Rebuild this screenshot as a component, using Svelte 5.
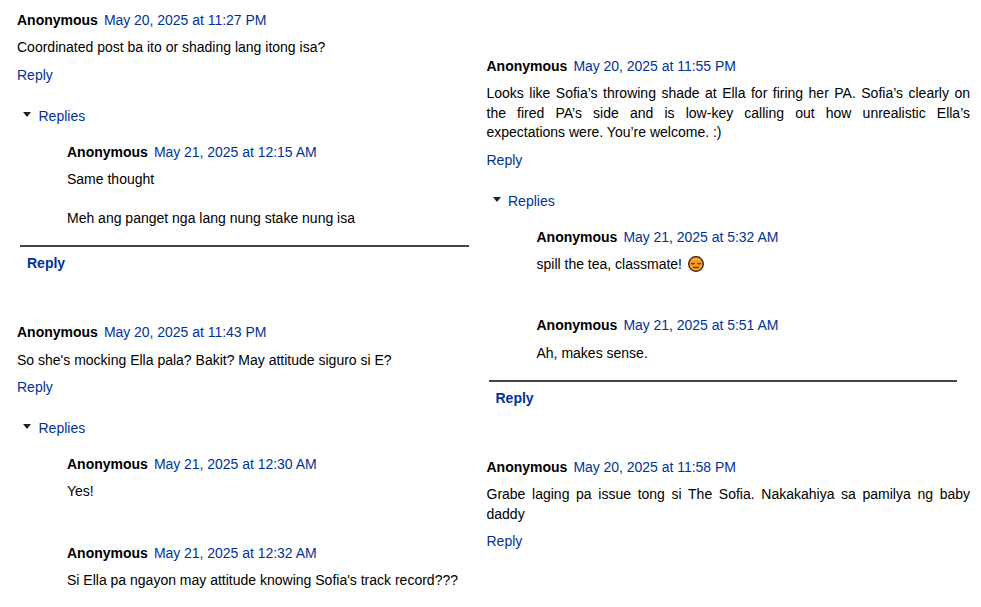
<script>
  const left = [
    {
      date: "May 20, 2025 at 11:27 PM",
      text: ["Coordinated post ba ito or shading lang itong isa?"],
      replies: [
        {
          date: "May 21, 2025 at 12:15 AM",
          text: ["Same thought", "Meh ang panget nga lang nung stake nung isa"]
        }
      ],
      footer: true
    },
    {
      date: "May 20, 2025 at 11:43 PM",
      text: ["So she's mocking Ella pala? Bakit? May attitude siguro si E?"],
      replies: [
        { date: "May 21, 2025 at 12:30 AM", text: ["Yes!"] },
        {
          date: "May 21, 2025 at 12:32 AM",
          text: ["Si Ella pa ngayon may attitude knowing Sofia's track record???"]
        }
      ]
    }
  ];

  const right = [
    {
      date: "May 20, 2025 at 11:55 PM",
      text: [
        "Looks like Sofia’s throwing shade at Ella for firing her PA. Sofia’s clearly on the fired PA’s side and is low-key calling out how unrealistic Ella’s expectations were. You’re welcome. :)"
      ],
      replies: [
        { date: "May 21, 2025 at 5:32 AM", text: ["spill the tea, classmate!"], emoji: true },
        { date: "May 21, 2025 at 5:51 AM", text: ["Ah, makes sense."] }
      ],
      footer: true
    },
    {
      date: "May 20, 2025 at 11:58 PM",
      text: ["Grabe laging pa issue tong si The Sofia. Nakakahiya sa pamilya ng baby daddy"]
    }
  ];
</script>

{#snippet byline(date)}
  <div class="byline">
    <span class="name">Anonymous</span>
    <a href="#c" class="date">{date}</a>
  </div>
{/snippet}

{#snippet comment(c)}
  <div class="comment">
    {@render byline(c.date)}
    <p class="body">{c.text[0]}</p>
    <a href="#r" class="reply">Reply</a>
    {#if c.replies}
      <div class="toggle">
        <span class="arrow"></span>
        <a href="#t">Replies</a>
      </div>
      <div class="thread">
        {#each c.replies as r}
          <div class="nested">
            {@render byline(r.date)}
            {#each r.text as line}
              <p class="body">
                {line}
                {#if r.emoji}
                  <svg class="emoji" viewBox="0 0 16 16" width="16" height="16">
                    <circle cx="8" cy="8" r="7.3" fill="#f59b26" stroke="#2a1904" stroke-width="1.3" />
                    <path d="M3.4 7.2q1.6 1.6 3.2 0M9.4 7.2q1.6 1.6 3.2 0" fill="none" stroke="#3d2206" stroke-width="1.1" />
                    <path d="M5.2 11q2.8 1.5 5.6 0" fill="none" stroke="#3d2206" stroke-width="1.2" />
                    <path d="M4 4q4-2.2 8 0" fill="none" stroke="#fbbf66" stroke-width="1" />
                  </svg>
                {/if}
              </p>
            {/each}
          </div>
        {/each}
      </div>
    {/if}
    {#if c.footer}
      <div class="footer">
        <a href="#f">Reply</a>
      </div>
    {/if}
  </div>
{/snippet}

<main class="page">
  <section class="col col-left">
    {#each left as c}
      {@render comment(c)}
    {/each}
  </section>
  <section class="col col-right">
    {#each right as c}
      {@render comment(c)}
    {/each}
  </section>
</main>

<style>
  :global(body) {
    margin: 0;
    background: #fff;
    overflow: hidden;
  }
  .page {
    display: flex;
    height: 607px;
    overflow: hidden;
    font-family: "Liberation Sans", Arial, sans-serif;
    font-size: 14px;
    line-height: 20px;
    color: #000;
  }
  a {
    color: #003399;
    text-decoration: none;
  }
  .col-left {
    width: 452px;
    margin-left: 17px;
    padding-top: 10px;
  }
  .col-right {
    width: 483.5px;
    margin-left: 17.5px;
    padding-top: 56px;
  }
  .byline {
    display: flex;
    gap: 6px;
  }
  .name {
    font-weight: 700;
  }
  .date {
    letter-spacing: -0.03px;
  }
  .body {
    margin: 7.3px 0 0;
    text-align: justify;
  }
  .col-right .body {
    margin-top: 8px;
    line-height: 19.7px;
  }
  .reply {
    display: block;
    margin-top: 7.7px;
  }
  .col-right .reply {
    margin-top: 7px;
  }
  .toggle {
    display: flex;
    align-items: center;
    gap: 7.5px;
    margin-top: 20.8px;
    padding-left: 6px;
  }
  .arrow {
    width: 0;
    height: 0;
    border-left: 4.5px solid transparent;
    border-right: 4.5px solid transparent;
    border-top: 5px solid #222;
    margin-bottom: 3px;
  }
  .thread {
    padding-left: 50px;
    margin-top: 16px;
  }
  .nested + .nested {
    margin-top: 41.7px;
  }
  .col-right .nested + .nested {
    margin-top: 40.7px;
  }
  .col-right .nested + .nested .body {
    margin-top: 8.7px;
  }
  .nested .body + .body {
    margin-top: 19px;
  }
  .emoji {
    vertical-align: -1px;
    margin: -2px 0 -2px 2px;
  }
  .footer {
    margin: 16.9px 0 0 3px;
    border-top: 2px solid #444;
    padding: 6px 0 0 7px;
    font-weight: 700;
  }
  .col-right .footer {
    margin: 16.4px 13px 0 2px;
  }
  .comment + .comment {
    margin-top: 49.3px;
  }
  .col-right .comment + .comment {
    margin-top: 49px;
  }
</style>
